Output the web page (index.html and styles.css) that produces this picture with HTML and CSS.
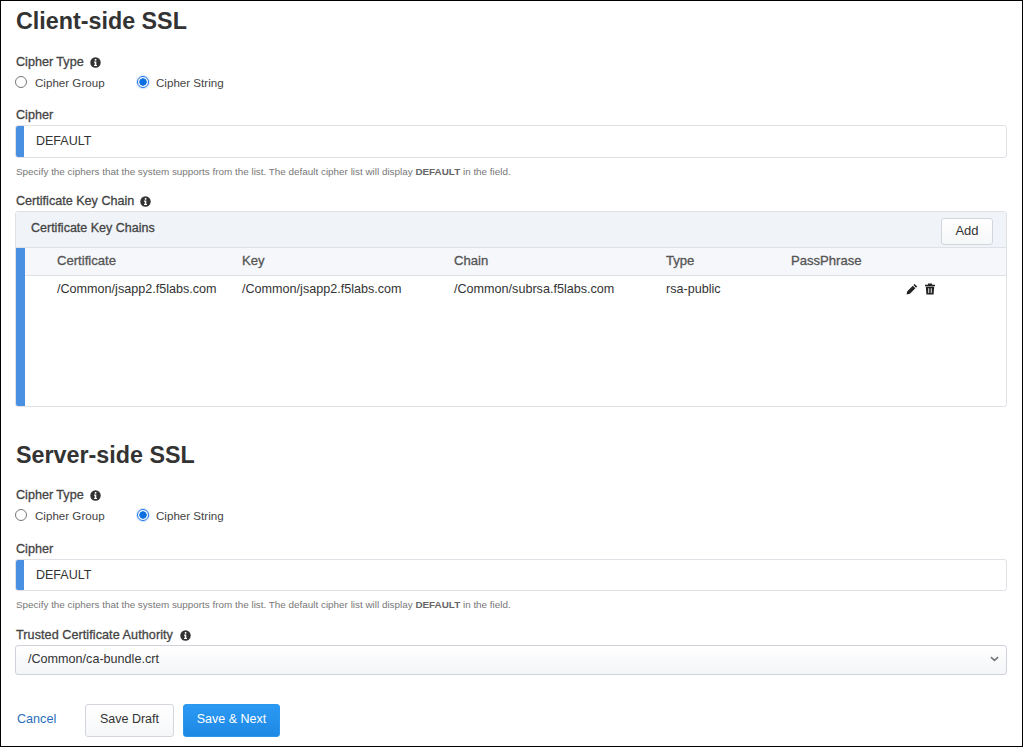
FILE: index.html
```html
<!DOCTYPE html>
<html lang="en">
<head>
<meta charset="utf-8">
<title>SSL</title>
<link rel="stylesheet" href="styles.css">
</head>
<body>
<svg class="defs" width="0" height="0" aria-hidden="true">
  <symbol id="info" viewBox="0 0 16 16"><circle cx="8" cy="8" r="7.6" fill="#333"/><rect x="6.9" y="2.9" width="2.4" height="2.4" rx=".5" fill="#fff"/><path d="M5.9 6.6h3.3v4.9h1v1.6H5.9v-1.6h1V8.2h-1z" fill="#fff"/></symbol>
</svg>
<main class="page">
  <section class="sec sec-client">
    <h2 class="title">Client-side SSL</h2>
    <div class="label lab-type">Cipher Type <svg class="info"><use href="#info"/></svg></div>
    <div class="radios">
      <span class="radio-item"><span class="radio"></span>Cipher Group</span>
      <span class="radio-item"><span class="radio on"></span>Cipher String</span>
    </div>
    <div class="label lab-cipher">Cipher</div>
    <div class="input"><span class="req"></span><span class="val">DEFAULT</span></div>
    <p class="help">Specify the ciphers that the system supports from the list. The default cipher list will display <b>DEFAULT</b> in the field.</p>
    <div class="label lab-chain">Certificate Key Chain <svg class="info"><use href="#info"/></svg></div>
    <div class="panel">
      <div class="panel-head"><span class="panel-title">Certificate Key Chains</span><button class="btn-add">Add</button></div>
      <div class="panel-body">
        <span class="req-bar"></span>
        <div class="table">
          <div class="row thead"><span>Certificate</span><span>Key</span><span>Chain</span><span>Type</span><span>PassPhrase</span><span></span></div>
          <div class="row tbody"><span>/Common/jsapp2.f5labs.com</span><span>/Common/jsapp2.f5labs.com</span><span>/Common/subrsa.f5labs.com</span><span>rsa-public</span><span></span>
            <span class="actions">
              <svg class="act" viewBox="0 0 12 12"><path d="M8.6.9l2.6 2.6-1.2 1.2-2.6-2.6zM6.8 2.7l2.6 2.6-5.5 5.5-3.4.8.8-3.4z" fill="#222"/></svg>
              <svg class="act" viewBox="0 0 12 12"><path d="M4.2.6h3.6l.5 1.1H11v1.5H1V1.7h2.7zM1.8 3.8h8.4l-.6 7.6H2.4zM4.3 5.2v4.9h.9V5.2zm2.5 0v4.9h.9V5.2z" fill="#222" fill-rule="evenodd"/></svg>
            </span>
          </div>
        </div>
      </div>
    </div>
  </section>
  <section class="sec sec-server">
    <h2 class="title">Server-side SSL</h2>
    <div class="label lab-type">Cipher Type <svg class="info"><use href="#info"/></svg></div>
    <div class="radios">
      <span class="radio-item"><span class="radio"></span>Cipher Group</span>
      <span class="radio-item"><span class="radio on"></span>Cipher String</span>
    </div>
    <div class="label lab-cipher">Cipher</div>
    <div class="input"><span class="req"></span><span class="val">DEFAULT</span></div>
    <p class="help">Specify the ciphers that the system supports from the list. The default cipher list will display <b>DEFAULT</b> in the field.</p>
    <div class="label lab-chain lab-ca">Trusted Certificate Authority <svg class="info"><use href="#info"/></svg></div>
    <div class="select"><span>/Common/ca-bundle.crt</span><svg class="chev" viewBox="0 0 10 6"><path d="M1 1l4 3.6L9 1" fill="none" stroke="#777" stroke-width="1.8"/></svg></div>
  </section>
  <div class="footer">
    <a class="cancel">Cancel</a>
    <button class="btn-draft">Save Draft</button>
    <button class="btn-next">Save &amp; Next</button>
  </div>
</main>
</body>
</html>
```
FILE: styles.css
```css
* { box-sizing: border-box; }
html, body { margin: 0; padding: 0; }
body { width: 1023px; height: 747px; overflow: hidden; background: #fff; font-family: "Liberation Sans", Arial, sans-serif; color: #333; }
.defs { position: absolute; }
.page { width: 1023px; height: 747px; border: 1px solid #000; padding: 0 15px 0 14px; }
.title { margin: 0; font-size: 23.3px; line-height: 28px; font-weight: 700; color: #333; padding-left: 1px; }
.sec-client { padding-top: 6px; }
.sec-client .lab-type { margin-top: 20px; }
.sec-server { padding-top: 34px; }
.label { font-size: 12.6px; line-height: 14px; font-weight: 400; -webkit-text-stroke: .3px #444; color: #444; padding-left: 1px; display: flex; align-items: center; gap: 6px; }
.lab-type { margin-top: 19px; }
.lab-cipher { margin-top: 18px; }
.lab-chain { margin-top: 17px; }
.lab-ca { margin-top: 18px; letter-spacing: .07px; gap: 7px; }
.sec-server .lab-cipher { margin-top: 19px; }
.info { width: 11px; height: 11px; }
.radios { display: flex; margin-top: 7px; height: 14px; font-size: 11.6px; line-height: 14px; color: #444; }
.radio-item { display: flex; align-items: center; width: 122px; }
.radio { width: 12px; height: 12px; border: 1px solid #777; border-radius: 50%; margin-right: 8px; background: #fff; margin-top: -2px; }
.radio.on { border: 1px solid #1a73e8; background: radial-gradient(circle, #0b6fe0 0 3.4px, #fff 4px); box-shadow: 0 0 1px 1px #cfe3fb; margin-right: 7px; }
.input { display: flex; margin-top: 3px; height: 33px; border: 1px solid #dfe1e6; border-radius: 3px; overflow: hidden; }
.sec-server .input { height: 32px; }
.req { width: 8px; margin: -1px 0; background: #4a90e2; flex: none; }
.val { font-size: 12.5px; line-height: 30px; padding-left: 12px; color: #333; }
.help { margin: 8px 0 0; font-size: 9.9px; line-height: 11px; color: #777; padding-left: 1px; }
.help b { color: #666; }
.panel { margin-top: 3px; height: 196px; border: 1px solid #dfe1e6; border-radius: 3px; overflow: hidden; display: flex; flex-direction: column; }
.panel-head { height: 36px; flex: none; background: #f0f3f8; border-bottom: 1px solid #dfe1e6; display: flex; justify-content: space-between; padding: 6px 13px 0 15px; }
.panel-title { font-size: 12.5px; line-height: 20px; -webkit-text-stroke: .3px #444; color: #444; }
.btn-add { width: 52px; height: 27px; background: linear-gradient(#fff, #f6f7f9); border: 1px solid #d3d6dd; border-radius: 3px; font: 13px "Liberation Sans", Arial, sans-serif; color: #333; padding: 0 0 3px; }
.panel-body { flex: 1; display: flex; }
.req-bar { width: 9px; background: #4a90e2; flex: none; }
.table { flex: 1; }
.row { display: grid; grid-template-columns: 185px 212px 212px 125px 114px 1fr; padding-left: 32px; font-size: 12.6px; color: #333; }
.thead { height: 28px; line-height: 26px; background: #f5f7fa; border-bottom: 1px solid #dfe1e6; -webkit-text-stroke: .3px #555; color: #555; font-size: 13.1px; }
.tbody { line-height: 26px; }
.actions { display: flex; gap: 6px; padding-top: 7px; height: 25px; padding-left: 1px; }
.act { width: 12px; height: 12px; }
.select { margin-top: 3px; height: 30px; border: 1px solid #cfd2da; border-radius: 3px; background: linear-gradient(#fff, #f4f5f7); display: flex; align-items: center; justify-content: space-between; padding: 0 7px 2px 12px; font-size: 12.6px; color: #333; }
.chev { width: 9px; height: 6px; }
.footer { display: flex; align-items: center; margin-top: 29px; padding-left: 2px; }
.cancel { font-size: 12.6px; color: #2a6ebb; width: 68px; padding-bottom: 4px; }
.btn-draft, .btn-next { font: 12.5px "Liberation Sans", Arial, sans-serif; height: 33px; border-radius: 3px; padding: 0 0 4px; }
.btn-draft { width: 89px; background: linear-gradient(#fff, #f6f7f9); border: 1px solid #d3d6dd; color: #333; margin-right: 9px; }
.btn-next { width: 97px; background: linear-gradient(#2b9af3, #1e88e5); border: 1px solid #2b96ee; color: #fff; }
```
